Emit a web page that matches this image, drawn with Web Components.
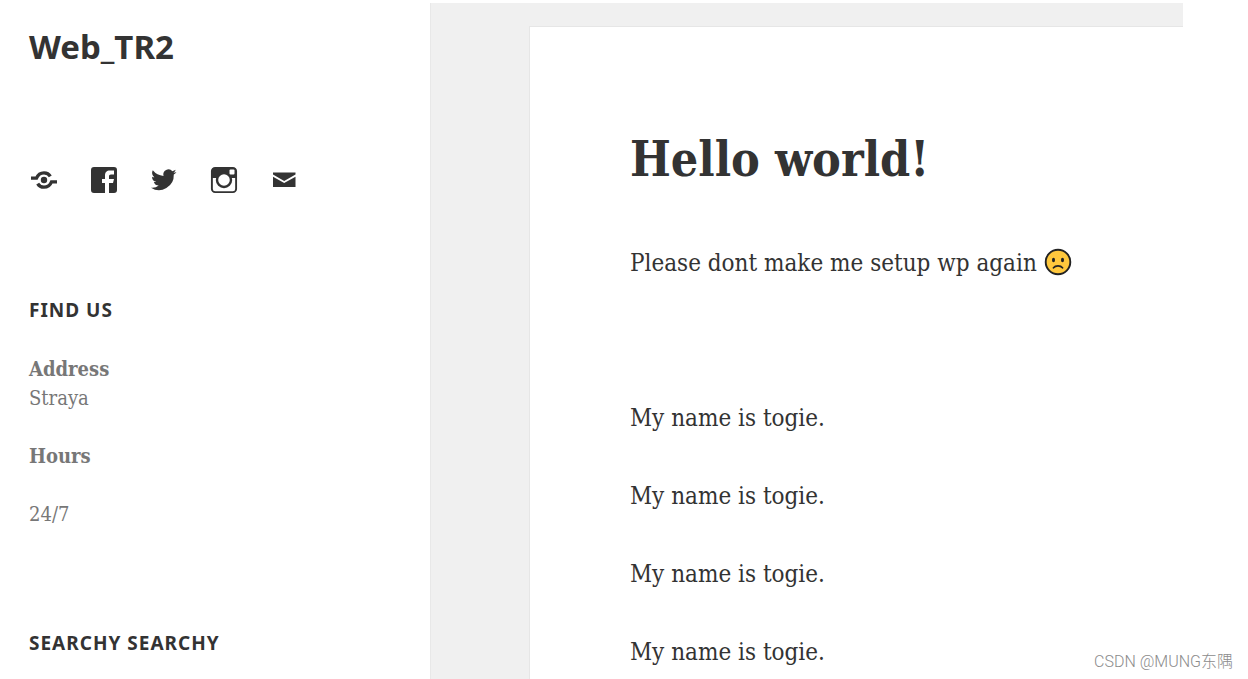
<!DOCTYPE html>
<html lang="en">
<head>
<meta charset="utf-8">
<title>Hello world! – Web_TR2</title>
<style>
html, body { margin: 0; background: #fff; }
body { --serif: "DejaVu Serif Condensed", "DejaVu Serif", serif; --sans: "Noto Sans", sans-serif; color: #333; font-family: var(--serif); }
</style>
</head>
<body>
<blog-page>
  <blog-sidebar slot="sidebar" site-title="Web_TR2">
    <social-links slot="social"></social-links>
    <side-widget heading="Find us">
      <p><strong>Address</strong><br>Straya</p>
      <p><strong>Hours</strong></p>
      <p>24/7</p>
    </side-widget>
    <side-widget heading="Searchy searchy"></side-widget>
  </blog-sidebar>
  <blog-post heading="Hello world!">
    <p>Please dont make me setup wp again <sad-face></sad-face></p>
    <p class="blank"></p>
    <p>My name is togie.</p>
    <p>My name is togie.</p>
    <p>My name is togie.</p>
    <p>My name is togie.</p>
  </blog-post>
  <corner-credit slot="credit">CSDN @MUNG东隅</corner-credit>
</blog-page>
<script>
class Base extends HTMLElement {
  connectedCallback() {
    if (!this.shadowRoot) this.attachShadow({ mode: "open" }).innerHTML = this.view();
  }
}

customElements.define("blog-page", class extends Base {
  view() {
    return `<style>
      :host { display: flex; position: relative; box-sizing: border-box; height: 100vh; overflow: hidden; padding: 3px 65px 0 0; }
      .side { flex: 0 0 430px; }
      main { flex: 1; min-width: 0; box-sizing: border-box; background: #f0f0f0; border-left: 1px solid #e8e8e8; padding: 23px 0 0 98px; }
    </style>
    <div class="side"><slot name="sidebar"></slot></div>
    <main><slot></slot></main>
    <slot name="credit"></slot>`;
  }
});

customElements.define("blog-sidebar", class extends Base {
  view() {
    return `<style>
      :host { display: block; padding: 23px 29px 0; }
      h1 { margin: 0 0 98px; font: 700 33px/42px var(--sans); }
      a { color: inherit; text-decoration: none; }
    </style>
    <h1><a href="#home">${this.getAttribute("site-title")}</a></h1>
    <slot name="social"></slot>
    <slot></slot>`;
  }
});

customElements.define("social-links", class extends Base {
  view() {
    const icons = [
      ["Website", `<path d="M1 12.200h5.500C8 8.500 10.500 6.800 14 6.800c3 0 5 1.200 6.300 3.600M27 15.800h-5.500C20 19.500 17.500 21.200 14 21.200c-3 0-5-1.200-6.300-3.600" fill="none" stroke="#333" stroke-width="3.300"/><circle cx="14" cy="14" r="3.200"/>`],
      ["Facebook", `<path fill-rule="evenodd" d="M4 1h20a3 3 0 0 1 3 3v20a3 3 0 0 1-3 3h-5V17h4l1-4h-5v-2.500c0-1.300.500-2 2-2h3V4.500h-4c-3.500 0-5 2-5 5V13h-3v4h3v10H4a3 3 0 0 1-3-3V4a3 3 0 0 1 3-3z"/>`],
      ["Twitter", `<path transform="translate(1 1) scale(1.060)" d="M24 4.600a10 10 0 0 1-2.800.800 5 5 0 0 0 2.100-2.700 10 10 0 0 1-3.100 1.200 4.900 4.900 0 0 0-8.400 4.500A14 14 0 0 1 1.700 3.100a4.900 4.900 0 0 0 1.500 6.600 4.900 4.900 0 0 1-2.200-.600v.100a4.900 4.900 0 0 0 3.900 4.800 5 5 0 0 1-2.200.100 4.900 4.900 0 0 0 4.600 3.400A9.900 9.900 0 0 1 0 19.500a14 14 0 0 0 21.500-12.400A10 10 0 0 0 24 4.600z"/>`],
      ["Instagram", `<rect x="1.900" y="1.900" width="24.200" height="24.200" rx="3.200" fill="#fff" stroke="#333" stroke-width="1.900"/><path d="M2 12V4a2 2 0 0 1 2-2h20a2 2 0 0 1 2 2v8z"/><circle cx="14" cy="14" r="7" fill="#fff" stroke="#333" stroke-width="2.400"/><rect x="19.500" y="3.500" width="5" height="5" rx="1" fill="#fff"/>`],
      ["Email", `<path d="M3 6.500h22.500v2L14.200 15 3 8.500zM3 10.700l11.200 6.400 11.300-6.400V21H3z"/>`]
    ];
    return `<style>
      :host { display: block; margin-bottom: 102px; }
      nav { display: flex; gap: 32px; padding-left: 1px; }
      a { display: block; width: 28px; height: 28px; }
      svg { display: block; fill: #333; }
    </style>
    <nav aria-label="Social links">${icons.map(([n, s]) =>
      `<a href="#${n.toLowerCase()}" aria-label="${n}"><svg width="28" height="28" viewBox="0 0 28 28" aria-hidden="true">${s}</svg></a>`).join("")}</nav>`;
  }
});

customElements.define("side-widget", class extends Base {
  view() {
    return `<style>
      :host { display: block; margin-bottom: 100px; color: #777; font-size: 20px; line-height: 29px; }
      h2 { margin: 0 0 30px; color: #333; font: 700 19px/29px var(--sans); letter-spacing: 1px; text-transform: uppercase; }
      ::slotted(p) { margin: 0 0 29px; }
    </style>
    <h2>${this.getAttribute("heading")}</h2>
    <slot></slot>`;
  }
});

customElements.define("blog-post", class extends Base {
  view() {
    return `<style>
      :host { display: block; box-sizing: border-box; min-height: 100vh; background: #fff; border: solid #e6e6e6; border-width: 1px 0 0 1px; padding: 102px 0 0 100px; font-size: 24px; line-height: 39px; }
      h1 { margin: 0 0 55px; font: 700 48px/60px var(--serif); }
      ::slotted(p) { margin: 0 0 39px; }
      ::slotted(p.blank) { height: 38px; }
    </style>
    <article><h1>${this.getAttribute("heading")}</h1><slot></slot></article>`;
  }
});

customElements.define("sad-face", class extends Base {
  view() {
    return `<style>
      :host { display: inline-block; vertical-align: -5px; }
      svg { display: block; }
    </style>
    <svg width="28" height="28" viewBox="0 0 28 28" role="img" aria-label="Sad face">
      <circle cx="14" cy="14" r="12.300" fill="#ffc83d" stroke="#222" stroke-width="1.900"/>
      <ellipse cx="9.500" cy="12" rx="1.500" ry="2.200" fill="#222"/>
      <ellipse cx="18.500" cy="12" rx="1.500" ry="2.200" fill="#222"/>
      <path d="M9.500 19.800c2-2.500 7-2.500 9 0" fill="none" stroke="#222" stroke-width="1.800" stroke-linecap="round"/>
    </svg>`;
  }
});

customElements.define("corner-credit", class extends Base {
  view() {
    return `<style>
      :host { position: absolute; right: 15px; bottom: 5px; color: #8c8c8c; font: 300 16px/24px Roboto, "Noto Sans CJK SC", sans-serif; white-space: nowrap; }
    </style><slot></slot>`;
  }
});
</script>
</body>
</html>
